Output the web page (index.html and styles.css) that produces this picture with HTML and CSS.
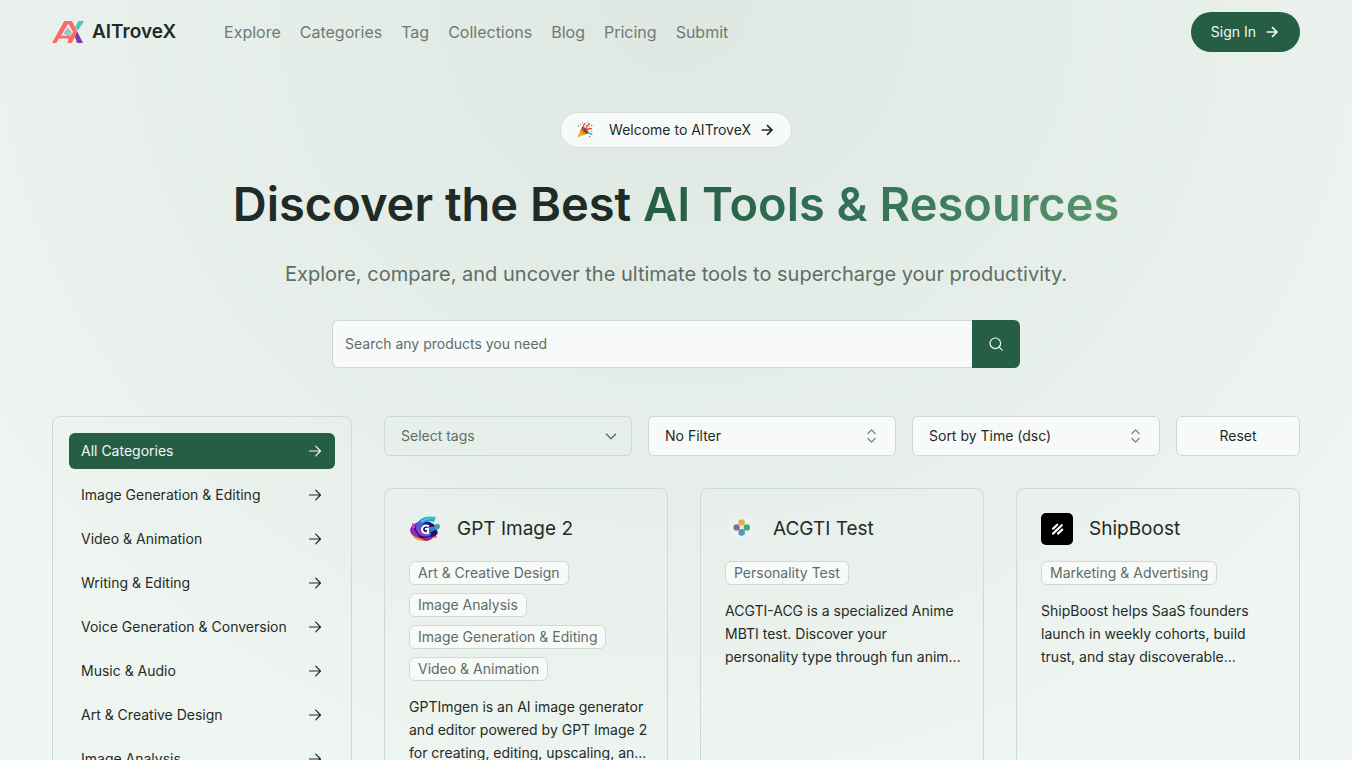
FILE: index.html
```html
<!DOCTYPE html>
<html lang="en">
<head>
<meta charset="utf-8">
<meta name="viewport" content="width=device-width, initial-scale=1">
<title>AITroveX</title>
<link rel="stylesheet" href="styles.css">
</head>
<body>
<svg class="sprite" aria-hidden="true">
  <symbol id="arrow" viewBox="0 0 16 16"><path d="M2.5 8h11M8.7 3.2 13.5 8l-4.8 4.8" fill="none" stroke="currentColor" stroke-linecap="round" stroke-linejoin="round"/></symbol>
  <symbol id="arrow-short" viewBox="0 0 16 16"><path d="M2.7 8h10.2M8 3.2 12.9 8 8 12.8" fill="none" stroke="currentColor"/></symbol>
  <symbol id="updown" viewBox="0 0 16 16"><path d="M3.5 6 7.5 2l4 4M3.5 10l4 4 4-4" fill="none" stroke="currentColor" stroke-linejoin="round"/></symbol>
</svg>
<div class="page">
  <header class="header container">
    <a class="brand" href="#">
      <svg class="logo" viewBox="0 0 32 22" aria-hidden="true">
        <path d="M26.5 0H32L26 9.5 23 6z" fill="#4fc4bb"/>
        <path d="M22.5 14.5 25.3 10.5 31 22h-6z" fill="#7b3fa5"/>
        <path d="M15.6 6.5 20 11.5 16.5 15.5 11.5 12.5z" fill="#9fc3c2"/>
        <path d="M0 22 12.3 0H20l5.4 11L19.8 22H15.3l1.9-4.5H6.8L4.3 22zM9 14.8h9.2l2.9-3.9L16.2 2.4z" fill="#fb6a67" fill-rule="evenodd"/>
      </svg>
      <span>AITroveX</span>
    </a>
    <nav class="nav">
      <a href="#">Explore</a><a href="#">Categories</a><a href="#">Tag</a><a href="#">Collections</a><a href="#">Blog</a><a href="#">Pricing</a><a href="#">Submit</a>
    </nav>
    <a class="signin" href="#">Sign In <svg class="icon bold"><use href="#arrow-short"/></svg></a>
  </header>

  <section class="hero container">
    <a class="welcome" href="#">
      <svg class="party" viewBox="0 0 16 16" aria-hidden="true">
        <path d="M4.8 5.2 11 11.4 1.2 15.3Q.4 15.4.6 14.5z" fill="#f5b52e"/>
        <path d="M3.8 7.4 8.6 12.3 6.6 13.2 3 9.3z" fill="#ed8c26"/>
        <ellipse cx="8" cy="8.3" rx="1.9" ry="4.3" transform="rotate(-45 8 8.3)" fill="#6d4c38"/>
        <path d="M7 8Q5.2 3.9 8.2 1.2M9 8Q10.5 5.5 9.5 4q1.8-.8 3.5-2.6" fill="none" stroke="#e94343" stroke-width="1.3"/>
        <path d="M9 9q2.3-3.3 6-2.2" fill="none" stroke="#e94343" stroke-width="1.3"/>
        <path d="M10.5 11q2.6-.4 4.8 1.7" fill="none" stroke="#3da5c7" stroke-width="1.5"/>
        <g fill="#e94343"><circle cx="1.5" cy="4" r=".7"/><circle cx="14.8" cy="3.5" r=".7"/><circle cx="12.6" cy="14.5" r=".7"/></g>
        <g fill="#f5b52e"><circle cx="5.5" cy="1" r=".7"/><circle cx="12" cy="4.3" r=".8"/><circle cx="14.7" cy="9.5" r=".7"/></g>
        <g fill="#4fb4d0"><circle cx="3.5" cy="2.5" r=".7"/><circle cx="11" cy=".8" r=".7"/></g>
      </svg>
      <span>Welcome to AITroveX</span>
      <svg class="icon bold"><use href="#arrow-short"/></svg>
    </a>
    <h1 class="title">Discover the Best <span class="accent">AI Tools &amp; Resources</span></h1>
    <p class="subtitle">Explore, compare, and uncover the ultimate tools to supercharge your productivity.</p>
    <form class="search">
      <input type="text" placeholder="Search any products you need" aria-label="Search any products you need">
      <button type="button" aria-label="Search"><svg class="icon" viewBox="0 0 16 16" fill="none" stroke="currentColor" stroke-linecap="round"><circle cx="7.3" cy="7.3" r="5.3"/><path d="m11.2 11.2 3 3"/></svg></button>
    </form>
  </section>

  <main class="content container">
    <aside class="sidebar">
      <a class="active" href="#">All Categories<svg class="icon"><use href="#arrow"/></svg></a>
      <a href="#">Image Generation &amp; Editing<svg class="icon"><use href="#arrow"/></svg></a>
      <a href="#">Video &amp; Animation<svg class="icon"><use href="#arrow"/></svg></a>
      <a href="#">Writing &amp; Editing<svg class="icon"><use href="#arrow"/></svg></a>
      <a href="#">Voice Generation &amp; Conversion<svg class="icon"><use href="#arrow"/></svg></a>
      <a href="#">Music &amp; Audio<svg class="icon"><use href="#arrow"/></svg></a>
      <a href="#">Art &amp; Creative Design<svg class="icon"><use href="#arrow"/></svg></a>
      <a href="#">Image Analysis<svg class="icon"><use href="#arrow"/></svg></a>
    </aside>
    <div class="listing">
      <div class="filters">
        <button class="control tags-button" type="button">Select tags <svg class="icon" viewBox="0 0 16 16"><path d="m3 5.8 5 5 5-5" fill="none" stroke="currentColor" stroke-width="1.5"/></svg></button>
        <div class="select">
          <select class="control" aria-label="Filter"><option>No Filter</option></select>
          <svg class="icon"><use href="#updown"/></svg>
        </div>
        <div class="select">
          <select class="control" aria-label="Sort"><option>Sort by Time (dsc)</option></select>
          <svg class="icon"><use href="#updown"/></svg>
        </div>
        <button class="control reset" type="button">Reset</button>
      </div>
      <div class="cards">
        <article class="card">
          <h2><svg class="thumb" viewBox="0 0 32 32" aria-hidden="true">
            <defs>
              <linearGradient id="swirl" x1="0" y1="1" x2="1" y2="0"><stop offset="0" stop-color="#e22ba8"/><stop offset=".4" stop-color="#3d5fe0"/><stop offset="1" stop-color="#18d3c4"/></linearGradient>
            </defs>
            <ellipse cx="15" cy="17" rx="13" ry="9" fill="#24137f"/>
            <path d="M1 18Q1 11 9 10l-4 6 6 9Q3 25 1 18z" fill="#9c26b9"/>
            <path d="M3 21q5 6 15 4l9-3q-5 7-14 6Q5 27 3 21z" fill="#f0a51f"/>
            <path d="M8 24q9 3 18-3-2 6-9 7z" fill="#a31a96"/>
            <path d="M27 4Q15 2 9 9q-5 7 2 13 7 4 14-2l1-6h-8v3h3q-4 3-7 0-3-4 1-7 4-3 10-1z" fill="url(#swirl)"/>
            <path d="M12 8q6-5 15-3-9 0-14 5z" fill="#32e0dd"/>
            <path d="M20 13q-6-2-7 3 0 5 6 4v-4h-3" fill="none" stroke="#fff" stroke-width="2"/>
            <path d="M25 12q5-3 6 1 0 4-5 4z" fill="#3aa59c"/>
            <path d="M3 14h3M23 24h5" stroke="#f24ca9" stroke-width="1.5"/>
            <path d="M22 19q4-3 7 0-1 5-7 5z" fill="#2b0f63"/><circle cx="4" cy="11" r="1" fill="#a36de4"/>
          </svg>GPT Image 2</h2>
          <div class="tags"><a href="#">Art &amp; Creative Design</a><a href="#">Image Analysis</a><a href="#">Image Generation &amp; Editing</a><a href="#">Video &amp; Animation</a></div>
          <p>GPTImgen is an AI image generator<br>and editor powered by GPT Image 2<br>for creating, editing, upscaling, an...</p>
        </article>
        <article class="card">
          <h2><svg class="thumb" viewBox="0 0 32 32" aria-hidden="true"><circle cx="16.5" cy="14.5" r="12" fill="#edf2f6"/><circle cx="16.6" cy="9.5" r="3.3" fill="#e9ae42"/><circle cx="11.6" cy="14.4" r="3.2" fill="#8b6798"/><circle cx="21.8" cy="14.4" r="3.2" fill="#42a878"/><circle cx="16.6" cy="19.4" r="3.3" fill="#4b9bb6"/></svg>ACGTI Test</h2>
          <div class="tags"><a href="#">Personality Test</a></div>
          <p>ACGTI-ACG is a specialized Anime<br>MBTI test. Discover your<br>personality type through fun anim...</p>
        </article>
        <article class="card">
          <h2><svg class="thumb" viewBox="0 0 32 32" aria-hidden="true"><rect width="32" height="32" rx="5"/><path d="m12 15.7 4.2-4M12 20.6l8.8-8.4M17 20.6l4.2-4" stroke="#fff" stroke-width="2.2" stroke-linecap="round"/></svg>ShipBoost</h2>
          <div class="tags"><a href="#">Marketing &amp; Advertising</a></div>
          <p>ShipBoost helps SaaS founders<br>launch in weekly cohorts, build<br>trust, and stay discoverable...</p>
        </article>
      </div>
    </div>
  </main>
</div>
</body>
</html>
```

FILE: styles.css
```css
* { box-sizing: border-box; }
body {
  margin: 0;
  color: #1f2b26;
  font-family: Inter, "Liberation Sans", sans-serif;
  font-size: 14px;
  line-height: 20px;
}
a { color: inherit; text-decoration: none; }
button, input, select { font: inherit; color: inherit; }
.sprite { display: none; }
.icon { width: 16px; height: 16px; flex: none; stroke-width: 1.2; }
.icon.bold { stroke-width: 1.7; }

.page {
  height: 100vh;
  overflow: hidden;
  background: radial-gradient(ellipse 64% 110% at 50% 0, #dee7e1 0%, #e5ede8 45%, #eff5f1 100%);
}
.container { width: 100%; max-width: 1400px; margin: 0 auto; padding: 0 52px; }

.header { display: flex; align-items: center; height: 64px; }
.brand { display: flex; align-items: center; gap: 8px; font-size: 19px; font-weight: 600; }
.logo { width: 32px; height: 22px; }
.nav { display: flex; gap: 19px; margin-left: 48px; font-size: 16px; color: #707a75; }
.signin {
  display: flex; align-items: center; gap: 8px;
  height: 40px; margin-left: auto; padding: 0 20px;
  border-radius: 20px; background: #265d45; color: #f2f8f4;
}

.hero { display: flex; flex-direction: column; align-items: center; padding-top: 48px; }
.welcome {
  display: flex; align-items: center; gap: 8px;
  height: 36px; padding: 0 16px;
  border: 1px solid #d3ddd7; border-radius: 18px; background: #f7faf8;
}
.party { width: 16px; height: 16px; margin-right: 8px; }
.title { margin: 28px 0 0; font-size: 47px; line-height: 56px; font-weight: 600; text-align: center; }
.accent {
  background: linear-gradient(90deg, #265d45, #32705a 45%, #5a9569);
  -webkit-background-clip: text; background-clip: text; color: transparent;
}
.subtitle { margin: 28px 0 0; font-size: 20px; line-height: 28px; color: #5e6d66; text-align: center; }
.search { display: flex; width: 100%; max-width: 688px; height: 48px; margin-top: 32px; }
.search input {
  flex: 1; min-width: 0; padding: 0 12px;
  border: 1px solid #cfd9d3; border-right: 0; border-radius: 6px 0 0 6px; background: #f7faf8;
}
.search input::placeholder { color: #5e6d66; opacity: 1; }
.search button {
  display: grid; place-items: center; width: 48px; padding: 0;
  border: 0; border-radius: 0 6px 6px 0; background: #265d45; color: #f2f8f4;
}

.content { display: grid; grid-template-columns: 300px minmax(0, 1fr); gap: 32px; margin-top: 48px; }
.sidebar {
  display: flex; flex-direction: column; gap: 8px;
  padding: 16px; border: 1px solid #d0dad4; border-radius: 8px;
}
.sidebar a {
  display: flex; align-items: center; justify-content: space-between;
  height: 36px; padding: 0 12px; border-radius: 6px;
}
.sidebar .active { background: #265d45; color: #f2f8f4; }

.filters { display: grid; grid-template-columns: 2fr 2fr 2fr 1fr; gap: 16px; }
.control {
  width: 100%; height: 40px; padding: 0 16px;
  border: 1px solid #cfd9d3; border-radius: 6px; background: #f7faf8;
  text-align: left; appearance: none;
}
.tags-button {
  display: flex; align-items: center; justify-content: space-between;
  padding-right: 12px; background: transparent; color: #5e6d66;
}
.select { position: relative; }
.select .icon { position: absolute; right: 16px; top: 12px; color: #7c8581; pointer-events: none; }
.reset { text-align: center; }

.cards { display: grid; grid-template-columns: repeat(3, minmax(0, 1fr)); gap: 32px; margin-top: 32px; }
.card { padding: 24px; border: 1px solid #d0dad4; border-radius: 8px; }
.card h2 { display: flex; align-items: center; gap: 16px; margin: 0; font-size: 19px; line-height: 32px; font-weight: 400; }
.thumb { width: 32px; height: 32px; flex: none; }
.tags { display: flex; flex-wrap: wrap; gap: 8px; margin-top: 16px; }
.tags a {
  padding: 1px 8px; border: 1px solid #cfd9d3; border-radius: 6px;
  background: #f7faf8; color: #5e6d66; white-space: nowrap;
}
.card p { margin: 14px 0 0; line-height: 23px; white-space: nowrap; }
```
